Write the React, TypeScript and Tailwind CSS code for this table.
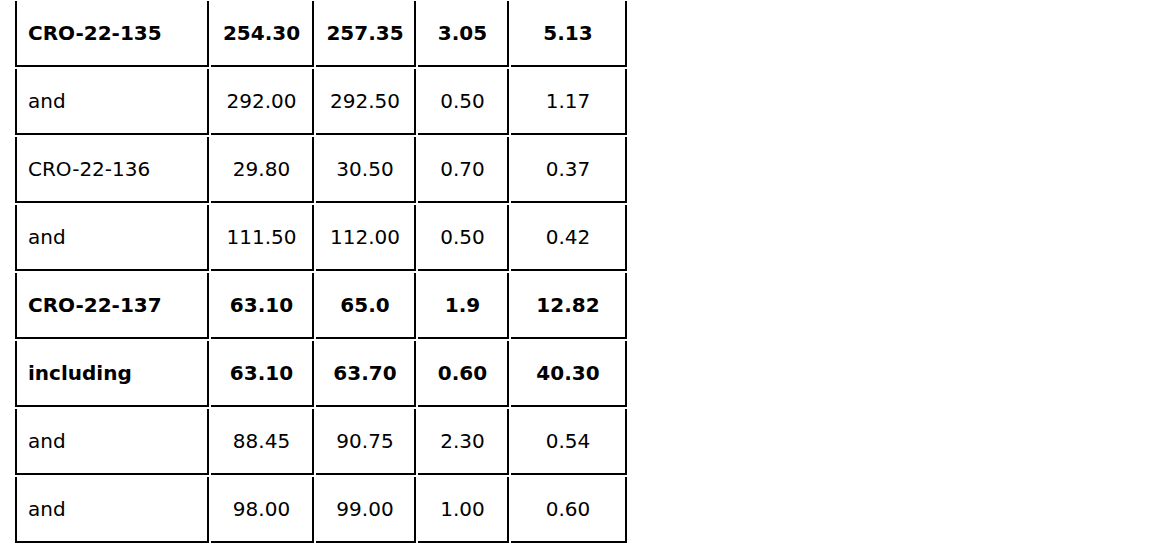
const rows = [
  { hole: 'CRO-22-135', from: '254.30', to: '257.35', len: '3.05', grade: '5.13', bold: true },
  { hole: 'and', from: '292.00', to: '292.50', len: '0.50', grade: '1.17' },
  { hole: 'CRO-22-136', from: '29.80', to: '30.50', len: '0.70', grade: '0.37' },
  { hole: 'and', from: '111.50', to: '112.00', len: '0.50', grade: '0.42' },
  { hole: 'CRO-22-137', from: '63.10', to: '65.0', len: '1.9', grade: '12.82', bold: true },
  { hole: 'including', from: '63.10', to: '63.70', len: '0.60', grade: '40.30', bold: true },
  { hole: 'and', from: '88.45', to: '90.75', len: '2.30', grade: '0.54' },
  { hole: 'and', from: '98.00', to: '99.00', len: '1.00', grade: '0.60' },
];

export default function App() {
  return (
    <div className="min-h-screen bg-white text-black" style={{ fontFamily: '"DejaVu Sans", Verdana, sans-serif' }}>
      <table className="ml-[13px] mt-[-1px] table-fixed border-separate border-spacing-[2px] text-[20px] leading-none">
        <colgroup>
          <col className="w-[194px]" />
          <col className="w-[103px]" />
          <col className="w-[100px]" />
          <col className="w-[91px]" />
          <col className="w-[116px]" />
        </colgroup>
        <tbody>
          {rows.map((r, i) => (
            <tr key={i} className={r.bold ? 'font-bold' : ''}>
              <td className="h-[66px] border-x-2 border-b-2 border-black pl-[11px] text-left align-middle">{r.hole}</td>
              <td className="h-[66px] border-r-2 border-b-2 border-black text-center align-middle">{r.from}</td>
              <td className="h-[66px] border-r-2 border-b-2 border-black text-center align-middle">{r.to}</td>
              <td className="h-[66px] border-r-2 border-b-2 border-black text-center align-middle">{r.len}</td>
              <td className="h-[66px] border-r-2 border-b-2 border-black text-center align-middle">{r.grade}</td>
            </tr>
          ))}
        </tbody>
      </table>
    </div>
  );
}
